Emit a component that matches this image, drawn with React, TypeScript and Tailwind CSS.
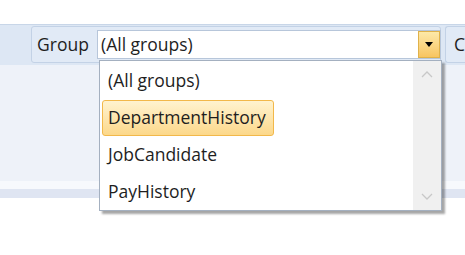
import React from "react";

const font = { fontFamily: '"Open Sans", "Noto Sans", sans-serif' };

export default function App() {
  return (
    <div className="relative w-[465px] h-[255px] bg-white overflow-hidden text-[#1e1e1e]" style={font}>
      <div className="h-[24px] bg-white" />
      <div className="h-[41px] bg-[#dde7f4] border-t border-[#c8d6e8] flex items-start pl-[31px] pt-[1px]">
        <div className="h-[37px] w-[410px] rounded-[3px] border border-[#c3d2e6] bg-[#e1eaf6] flex items-center pl-[5px] shrink-0">
          <span className="text-[17.5px] leading-none w-[60px] shrink-0">Group</span>
          <div className="h-[29px] w-[344px] bg-white border border-[#b7c6da] flex items-center justify-between shrink-0">
            <span className="text-[17.5px] leading-none pl-[3px]">(All groups)</span>
            <div className="h-[27px] w-[22px] border border-[#e0b24a] bg-gradient-to-b from-[#fde9a8] to-[#f8c560] flex items-center justify-center">
              <svg width="8" height="5" viewBox="0 0 8 5"><path d="M0 0h8L4 5z" fill="#000" /></svg>
            </div>
          </div>
        </div>
        <div className="h-[37px] ml-[4px] flex-1 rounded-l-[3px] border border-r-0 border-[#c3d2e6] bg-[#e1eaf6] flex items-center pl-[8px]">
          <span className="text-[17.5px] leading-none">C</span>
        </div>
      </div>
      <div className="h-[116px] bg-[#eef2f9]" />
      <div className="h-[8px] bg-[#f7f9fd]" />
      <div className="h-[9px] bg-[#dfe5f2]" />

      <div className="absolute left-[99px] top-[60px] w-[343px] h-[151px] bg-white border border-[#a4b0c0] shadow-[3px_3px_2px_rgba(0,0,0,0.35)] flex">
        <div className="flex-1 flex flex-col pl-[2px] pt-[1px]">
          {["(All groups)", "DepartmentHistory", "JobCandidate", "PayHistory"].map((t, i) => (
            <div key={t} className="h-[37px] flex items-center shrink-0">
              <div
                className={
                  i === 1
                    ? "h-[36px] w-[172px] flex items-center pl-[5px] rounded-[3px] border border-[#f2b84a] bg-gradient-to-b from-[#fff3cf] to-[#fcd88a] text-[17.5px]"
                    : "h-[36px] flex items-center pl-[6px] text-[17.5px]"
                }
              >
                {t}
              </div>
            </div>
          ))}
        </div>
        <div className="w-[28px] bg-[#f0f0f0] flex flex-col justify-between items-center py-[10px]">
          <svg width="12" height="7" viewBox="0 0 12 7"><path d="M1 6l5-5 5 5" fill="none" stroke="#c8c8c8" strokeWidth="1.3" /></svg>
          <svg width="12" height="7" viewBox="0 0 12 7"><path d="M1 1l5 5 5-5" fill="none" stroke="#c8c8c8" strokeWidth="1.3" /></svg>
        </div>
      </div>
    </div>
  );
}
